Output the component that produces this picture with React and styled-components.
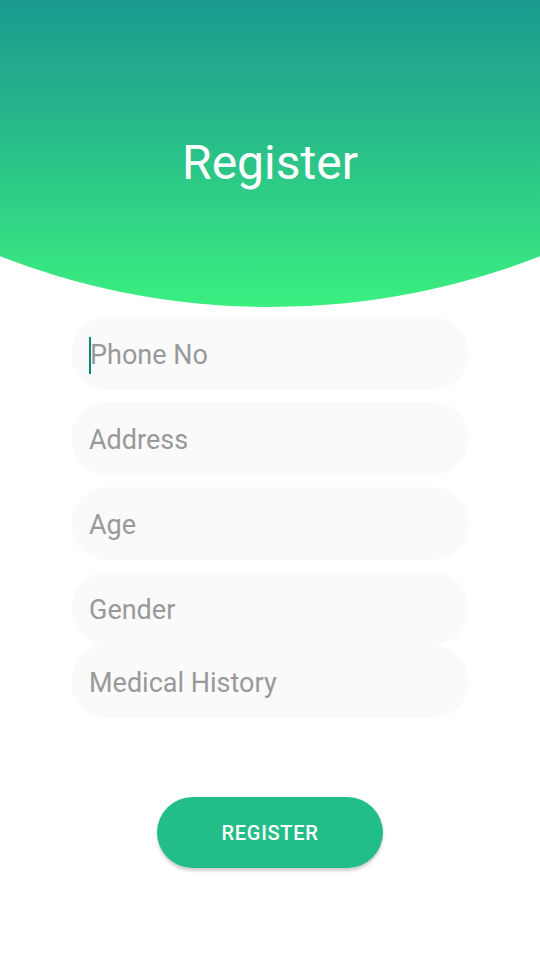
import React from 'react';
import styled, { createGlobalStyle } from 'styled-components';

const GlobalStyle = createGlobalStyle`
    html, body {
        margin: 0;
        padding: 0;
        background: #ffffff;
    }

    body {
        font-family: 'Roboto', 'Liberation Sans', sans-serif;
    }
`;

const fields = [
    { label: 'Phone No', focused: true, gap: 12 },
    { label: 'Address', gap: 12 },
    { label: 'Age', gap: 12 },
    { label: 'Gender', gap: 0 },
    { label: 'Medical History', gap: 0 },
];

export default function App() {
    return (
        <>
            <GlobalStyle/>
            <Screen>
                <Header>
                    <Title>Register</Title>
                </Header>
                <Form>
                    {fields.map((f) => (
                        <Field key={f.label} $gap={f.gap}>
                            {f.focused && <Caret/>}
                            <Placeholder>{f.label}</Placeholder>
                        </Field>
                    ))}
                    <Button type="button">REGISTER</Button>
                </Form>
            </Screen>
        </>
    );
}

const Screen = styled.div`
    width: 540px;
    height: 960px;
    background: #ffffff;
    display: flex;
    flex-direction: column;
    overflow: hidden;
`;

const Header = styled.div`
    height: 307px;
    flex-shrink: 0;
    display: flex;
    justify-content: center;
    padding-top: 135px;
    box-sizing: border-box;
    background: linear-gradient(180deg, #1a9a8f 0%, #27b88a 40%, #3bef80 100%);
    clip-path: circle(744px at 270px -437px);
`;

const Title = styled.h1`
    margin: 0;
    color: #ffffff;
    font-family: 'Roboto', sans-serif;
    font-weight: 400;
    font-size: 48px;
    line-height: 56px;
    height: 56px;
`;

const Form = styled.div`
    display: flex;
    flex-direction: column;
    align-items: center;
    padding-top: 10px;
`;

const Field = styled.div`
    width: 398px;
    height: 73px;
    box-sizing: border-box;
    border-radius: 37px;
    background: #fafafa;
    display: flex;
    align-items: center;
    padding-left: 18px;
    margin-bottom: ${(p) => p.$gap}px;
`;

const Caret = styled.span`
    display: inline-block;
    width: 2px;
    height: 37px;
    margin-top: 3px;
    background: #00897b;
    margin-right: -1px;
`;

const Placeholder = styled.span`
    font-family: 'Roboto', sans-serif;
    font-size: 27px;
    color: #999999;
    line-height: 1;
    margin-top: 3px;
`;

const Button = styled.button`
    margin-top: 79px;
    width: 226px;
    height: 71px;
    border: none;
    border-radius: 36px;
    background: #23be87;
    color: #ffffff;
    font-family: 'Roboto', sans-serif;
    font-weight: 500;
    font-size: 20px;
    letter-spacing: 0.7px;
    box-shadow: 0 3px 3px rgba(0, 0, 0, 0.18);
    cursor: pointer;
`;
